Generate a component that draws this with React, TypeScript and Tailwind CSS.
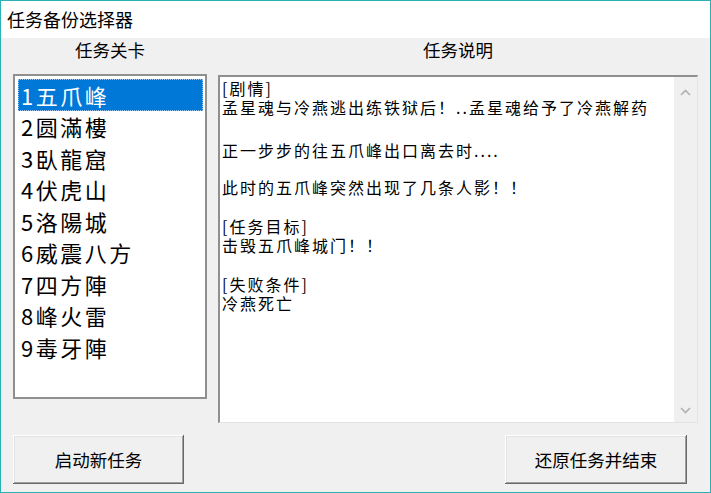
import React from "react";

const items = ["1五爪峰", "2圆滿樓", "3臥龍窟", "4伏虎山", "5洛陽城", "6威震八方", "7四方陣", "8峰火雷", "9毒牙陣"];

const lines: (string | null)[] = [
  "[剧情]",
  "孟星魂与冷燕逃出练铁狱后！..孟星魂给予了冷燕解药",
  null,
  "正一步步的往五爪峰出口离去时....",
  null,
  "此时的五爪峰突然出现了几条人影！！",
  null,
  "[任务目标]",
  "击毁五爪峰城门！！",
  null,
  "[失败条件]",
  "冷燕死亡",
];

const blankHeights = [24, 18, 20, 20];

export default function App() {
  let bi = 0;
  return (
    <div
      className="w-[711px] h-[493px] flex flex-col border border-[#2bb0b6] bg-[#f0f0f0] overflow-hidden text-black"
      style={{ fontFamily: '"Noto Sans CJK SC", "Noto Sans", sans-serif' }}
    >
      <div className="h-[37px] bg-white flex items-center pl-[6px] pb-[1px] text-[18px] leading-none shrink-0">
        任务备份选择器
      </div>
      <div className="flex-1 flex flex-col pl-[12px] pr-[12px]">
        <div className="flex gap-[11px] h-[36px]">
          <div className="w-[194px] h-[24px] flex items-center justify-center text-[17.5px] leading-none">任务关卡</div>
          <div className="w-[480px] h-[24px] flex items-center justify-center text-[17.5px] leading-none">任务说明</div>
        </div>
        <div className="flex gap-[11px] items-start">
          <div className="w-[194px] h-[325px] bg-white border-2 border-[#8f8f8f] pt-[3px] pl-[3px] pr-[2px]">
            {items.map((it, i) => (
              <div
                key={it}
                className={
                  "h-[31.5px] flex items-center pl-[3px] text-[22px] tracking-[2.5px] leading-none " +
                  (i === 0 ? "bg-[#0078d7] text-white outline-1 outline-dotted outline-[#9cc7ef] -outline-offset-1" : "")
                }
              >
                {it}
              </div>
            ))}
          </div>
          <div className="mt-px w-[480px] h-[348px] bg-white border-t-2 border-l-2 border-[#8f8f8f] border-r border-b border-r-[#e3e3e3] border-b-[#e3e3e3] flex">
            <div className="flex-1 pl-[2px] pt-[2px] text-[16px] tracking-[2px] whitespace-nowrap overflow-hidden">
              {lines.map((l, i) =>
                l === null ? (
                  <div key={i} style={{ height: blankHeights[bi++] }} />
                ) : (
                  <div key={i} className="h-[19px] leading-[19px]">
                    {l}
                  </div>
                )
              )}
            </div>
            <div className="w-[23px] bg-[#f0f0f0] flex flex-col justify-between items-center">
              <div className="h-[30px] flex items-center justify-center">
                <svg width="11" height="7" viewBox="0 0 11 7">
                  <path d="M1 6 L5.5 1.5 L10 6" fill="none" stroke="#b0b0b0" strokeWidth="1.6" />
                </svg>
              </div>
              <div className="h-[24px] flex items-center justify-center">
                <svg width="11" height="7" viewBox="0 0 11 7">
                  <path d="M1 1 L5.5 5.5 L10 1" fill="none" stroke="#b0b0b0" strokeWidth="1.6" />
                </svg>
              </div>
            </div>
          </div>
        </div>
        <div className="flex justify-between mt-[12px] pr-[11px]">
          <button className="w-[171px] h-[49px] bg-[#f0f0f0] text-[17.5px] leading-none shadow-[inset_-1px_-1px_0_#696969,inset_1px_1px_0_#ffffff,inset_-2px_-2px_0_#a0a0a0,inset_2px_2px_0_#e3e3e3]">
            启动新任务
          </button>
          <button className="w-[182px] h-[49px] bg-[#f0f0f0] text-[17.5px] leading-none shadow-[inset_-1px_-1px_0_#696969,inset_1px_1px_0_#ffffff,inset_-2px_-2px_0_#a0a0a0,inset_2px_2px_0_#e3e3e3]">
            还原任务并结束
          </button>
        </div>
      </div>
    </div>
  );
}
